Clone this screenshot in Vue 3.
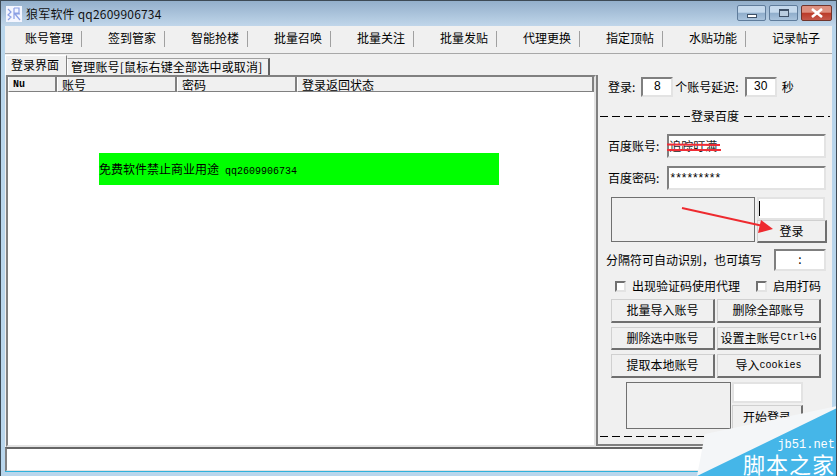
<script setup>
const menus = ['账号管理','签到管家','智能抢楼','批量召唤','批量关注','批量发贴','代理更换','指定顶帖','水贴功能','记录帖子']
const buttons = [
  { cjk: '批量导入账号', latin: '' },
  { cjk: '删除全部账号', latin: '' },
  { cjk: '删除选中账号', latin: '' },
  { cjk: '设置主账号', latin: 'Ctrl+G' },
  { cjk: '提取本地账号', latin: '' },
  { cjk: '导入', latin: 'cookies' }
]
</script>

<template>
  <div class="win">
    <header class="title">
      <svg class="logo" width="16" height="16" viewBox="0 0 16 16">
        <rect width="16" height="16" fill="#f4f6ff"/>
        <path d="M2 3l3 3-3 3 3 2-3 3M8 2v11M8 2h5v5H8M8 8h6M9 8l5 6" fill="none" stroke="#8a9fe4" stroke-width="1.2"/>
      </svg>
      <span class="title-text">狼军软件 qq2609906734</span>
      <div class="controls">
        <span class="ctl"><i class="min"></i></span>
        <span class="ctl"><i class="max"></i></span>
        <span class="ctl close">
          <svg width="14" height="10" viewBox="0 0 14 10"><path d="M2 1l10 8M12 1L2 9" stroke="#fff" stroke-width="2.6"/></svg>
        </span>
      </div>
    </header>

    <nav class="menu">
      <span v-for="m in menus" :key="m" class="menu-item">{{ m }}</span>
    </nav>

    <main class="body">
      <section class="left">
        <div class="tabs">
          <span class="tab active">登录界面</span>
          <span class="tab">管理账号[鼠标右键全部选中或取消]</span>
        </div>
        <div class="table">
          <div class="thead">
            <span class="th nu">Nu</span>
            <span class="th c2">账号</span>
            <span class="th c2">密码</span>
            <span class="th c3">登录返回状态</span>
          </div>
          <div class="tbody">
            <div class="banner">免费软件禁止商业用途<span class="mono">qq2609906734</span></div>
          </div>
        </div>
      </section>

      <aside class="panel">
        <div class="row-top">
          <span>登录:</span><span class="field small first">8</span>
          <span>个账号延迟:</span><span class="field small next">30</span>
          <span class="sec">秒</span>
        </div>
        <div class="divider"><span>登录百度</span></div>
        <div class="cred">
          <span>百度账号:</span>
          <span class="field wide name">追踪叮满</span>
        </div>
        <div class="cred second">
          <span>百度密码:</span>
          <span class="field wide pwd">*********</span>
        </div>
        <div class="captcha">
          <div class="cap-img"></div>
          <div class="cap-side">
            <span class="field cap-in"><i class="caret"></i></span>
            <span class="btn cap-btn">登录</span>
          </div>
        </div>
        <div class="sep-row">
          <span>分隔符可自动识别&#xFF0C;也可填写</span>
          <span class="field sep-in">:</span>
        </div>
        <div class="checks">
          <i class="cb"></i><span class="cb-label">出现验证码使用代理</span>
          <i class="cb second-cb"></i><span class="cb-label">启用打码</span>
        </div>
        <div class="btn-grid">
          <span v-for="b in buttons" :key="b.cjk" class="btn">{{ b.cjk }}<span v-if="b.latin" class="btn-latin">{{ b.latin }}</span></span>
        </div>
        <div class="captcha2">
          <div class="cap-img2"></div>
          <div class="cap-side2">
            <span class="field cap-in2"></span>
            <span class="btn cap-btn2">开始登录</span>
          </div>
        </div>
        <div class="dash-bottom"></div>
      </aside>
    </main>

    <footer class="status"></footer>

    <svg class="strike" width="56" height="12" viewBox="0 0 56 12">
      <path d="M0 2.5L53 3M0 8L54 8" stroke="#f02c36" stroke-width="2"/>
    </svg>

    <svg class="arrow" width="100" height="36" viewBox="0 0 100 36">
      <path d="M1 1L82 19" stroke="#ee2a2f" stroke-width="2"/>
      <path d="M92 22L77 26L80 13Z" fill="#ee2a2f"/>
    </svg>

    <div class="mark">
      <svg class="mark-bg" width="140" height="70" viewBox="0 0 140 70">
        <path d="M0 70L8 28L140 0V70Z" fill="#f4f6f8"/>
        <path d="M0 70L140 2V70Z" fill="#45b6e8"/>
      </svg>
      <span class="mark-url">jb51.net</span>
      <span class="mark-name">脚本之家</span>
    </div>
  </div>
</template>

<style>
html, body { margin: 0; background: #f0f0f0; }
</style>

<style scoped>
.win {
  position: relative;
  width: 837px;
  height: 476px;
  box-sizing: border-box;
  overflow: hidden;
  display: flex;
  flex-direction: column;
  background: #f0f0f0;
  border: 1px solid #3d4a55;
  border-bottom: 0;
  color: #000;
  font: 12px/16px "Noto Sans CJK SC", "Liberation Sans", sans-serif;
}
.win::before {
  content: "";
  position: absolute;
  inset: 25px 0 0 0;
  border-left: 4px solid #b9d6ec;
  border-right: 4px solid #b9d6ec;
  border-bottom: 4px solid #b9d6ec;
  box-shadow: inset 0 -1px 0 #2fb2dc;
  pointer-events: none;
  z-index: 1;
}
.title {
  height: 25px;
  flex: none;
  display: flex;
  align-items: center;
  padding: 0 4px;
  background: linear-gradient(#93afcb, #c0d6ea);
  box-sizing: border-box;
}
.logo { margin: 0 4px 0 1px; }
.title-text { color: #111; font-size: 12px; font-family: "Noto Sans CJK SC", "Noto Sans", sans-serif; letter-spacing: .2px; }
.controls { margin-left: auto; display: flex; gap: 3px; align-self: flex-start; margin-top: 4px; }
.ctl {
  width: 29px;
  height: 16px;
  box-sizing: border-box;
  border: 1px solid #5f7c9b;
  border-radius: 2px;
  background: linear-gradient(#c5d9ec 45%, #8fadcb 50%, #a9c3dc);
  display: flex;
  align-items: center;
  justify-content: center;
}
.ctl i { display: block; box-sizing: border-box; }
.min { width: 10px; height: 4px; margin-top: 5px; background: #fff; border: 1px solid #3f5167; }
.max { width: 10px; height: 8px; border: 1px solid #3f5167; border-top-width: 2px; background: #b9cde0; }
.close { width: 31px; background: linear-gradient(#dd8f7e 45%, #bb3a28 50%, #c5584a); border-color: #70342b; }

.menu {
  height: 28px;
  flex: none;
  display: flex;
  align-items: center;
  padding: 0 0 1px 4px;
  box-sizing: border-box;
  border-bottom: 1px solid #a8a8a8;
  margin-bottom: 1px;
}
.menu-item {
  width: 83px;
  flex: none;
  box-sizing: border-box;
  padding-left: 26px;
  height: 16px;
  line-height: 14px;
  font-size: 12px;
  white-space: nowrap;
  border-right: 1px solid #a0a0a0;
}
.menu-item:first-child { width: 77px; padding-left: 20px; }
.menu-item:last-child { border-right: 0; }

.body { flex: 1; min-height: 0; display: flex; padding-left: 4px; }
.left { width: 591px; flex: none; display: flex; flex-direction: column; }
.tabs { height: 20px; flex: none; display: flex; align-items: flex-end; }
.tab {
  height: 16px;
  padding: 0 5px 0 3px;
  border: 1px solid #a0a0a0;
  border-right: 2px solid #606060;
  border-bottom: 0;
  border-left-color: #fff;
  white-space: nowrap;
  letter-spacing: .2px;
}
.tab.active { height: 19px; width: 50px; padding: 0 5px; border-right: 1px solid #808080; border-top-color: #fff; line-height: 17px; letter-spacing: 0; }
.table {
  height: 372px;
  flex: none;
  box-sizing: border-box;
  margin-left: 1px;
  border: 2px solid #e3e3e3;
  border-top-color: #808080;
  border-left-color: #808080;
  display: flex;
  flex-direction: column;
  background: #fff;
}
.thead { height: 15px; flex: none; display: flex; background: #f0f0f0; border-right: 2px solid #808080; }
.th { box-sizing: border-box; height: 15px; line-height: 15px; padding-left: 4px; border-right: 2px solid #808080; border-bottom: 1px solid #808080; border-left: 1px solid #fff; white-space: nowrap; }
.nu { width: 49px; font: bold 10px/15px "Liberation Mono", monospace; }
.c2 { width: 120px; }
.c3 { flex: 1; border-right: 0; }
.tbody { flex: 1; padding: 61px 0 0 91px; }
.banner {
  width: 400px;
  height: 32px;
  background: #00ff00;
  line-height: 32px;
  white-space: nowrap;
}
.mono { font: 10px/32px "Liberation Mono", monospace; margin-left: 6px; }

.panel {
  flex: 1;
  box-sizing: border-box;
  height: 371px;
  padding-left: 10px;
  border-left: 2px solid #808080;
  border-bottom: 2px solid #808080;
  margin-top: 20px;
  position: relative;
}
.field {
  box-sizing: border-box;
  display: block;
  background: #fff;
  border: 2px solid #e3e3e3;
  border-top-color: #7f7f7f;
  border-left-color: #7f7f7f;
  white-space: nowrap;
}
.row-top { display: flex; align-items: center; height: 20px; margin-top: 2px; }
.small { width: 32px; height: 20px; text-align: center; font: 12px/15px "Liberation Sans", sans-serif; }
.small.first { margin: 0 2px 0 6px; }
.small.next { margin: 0 5px 0 6px; }
.divider {
  height: 16px;
  margin: 11px 0 0 -8px;
  width: 230px;
  display: flex;
  align-items: center;
  justify-content: center;
  background: repeating-linear-gradient(90deg, #000 0 8px, transparent 8px 12px) 0 50% / 100% 1px no-repeat;
}
.divider span { background: #f0f0f0; padding: 0 1px; }
.cred { display: flex; align-items: center; height: 24px; margin-top: 10px; }
.cred.second { margin-top: 8px; }
.wide { width: 159px; height: 24px; margin-left: 8px; line-height: 20px; }
.name { font-size: 12px; color: #222; }
.pwd { font: 12px/22px "Liberation Mono", monospace; letter-spacing: -1.6px; }
.captcha { display: flex; margin: 7px 0 0 3px; height: 47px; }
.cap-img { width: 144px; height: 45px; box-sizing: border-box; border: 1px solid #707070; }
.cap-side { margin-left: 2px; }
.cap-in { width: 68px; height: 23px; border: 2px solid #e3e3e3; position: relative; }
.caret { position: absolute; left: 0; top: 2px; width: 1px; height: 15px; background: #000; }
.btn {
  box-sizing: border-box;
  display: flex;
  align-items: center;
  justify-content: center;
  white-space: nowrap;
  background: #f0f0f0;
  border: 1px solid #d0d0d0;
  border-right: 2px solid #6f6f6f;
  border-bottom: 2px solid #6f6f6f;
}
.btn-latin { font: 10px/16px "Liberation Mono", monospace; margin-top: 1px; }
.cap-btn { width: 70px; height: 23px; }
.sep-row { display: flex; align-items: center; height: 22px; margin: 5px 0 0 -2px; }
.sep-in { width: 52px; height: 22px; margin-left: 12px; text-align: center; line-height: 16px; }
.checks { display: flex; align-items: center; height: 16px; margin: 7px 0 0 7px; }
.cb { width: 11px; height: 11px; flex: none; box-sizing: border-box; background: #fff; border: 2px solid #e3e3e3; border-top-color: #707070; border-left-color: #707070; }
.cb-label { margin-left: 6px; }
.second-cb { margin-left: 16px; }
.btn-grid { display: grid; grid-template-columns: 104px 104px; grid-auto-rows: 23.5px; gap: 4px 2px; margin: 5px 0 0 3px; }
.captcha2 { display: flex; margin: 4px 0 0 18px; height: 47px; }
.cap-img2 { width: 105px; height: 47px; box-sizing: border-box; border: 1px solid #707070; }
.cap-side2 { margin-left: 1px; }
.cap-in2 { width: 71px; height: 21px; border: 2px solid #e3e3e3; }
.cap-btn2 { width: 71px; height: 26px; margin-top: 2px; }
.dash-bottom {
  height: 1px;
  margin: 7px 0 0 -8px;
  width: 233px;
  background: repeating-linear-gradient(90deg, #000 0 8px, transparent 8px 12px);
}
.status {
  height: 25px;
  flex: none;
  box-sizing: border-box;
  margin: 1px 4px 4px 4px;
  background: #fff;
  border: 2px solid #e3e3e3;
  border-top-color: #666;
  border-left-color: #808080;
}

.strike { position: absolute; left: 666px; top: 141px; z-index: 2; }
.arrow { position: absolute; left: 680px; top: 206px; z-index: 2; }
.mark { position: absolute; right: -1px; bottom: 0; width: 140px; height: 70px; z-index: 3; overflow: hidden; }
.mark-bg { position: absolute; left: 0; top: 0; }
.mark-url { position: absolute; right: 2px; top: 34px; color: #fff; font: 12px/11px "Liberation Mono", monospace; }
.mark-name { position: absolute; right: 2px; top: 46px; color: #fff; font-size: 22px; line-height: 23px; letter-spacing: 1px; white-space: nowrap; }
</style>
